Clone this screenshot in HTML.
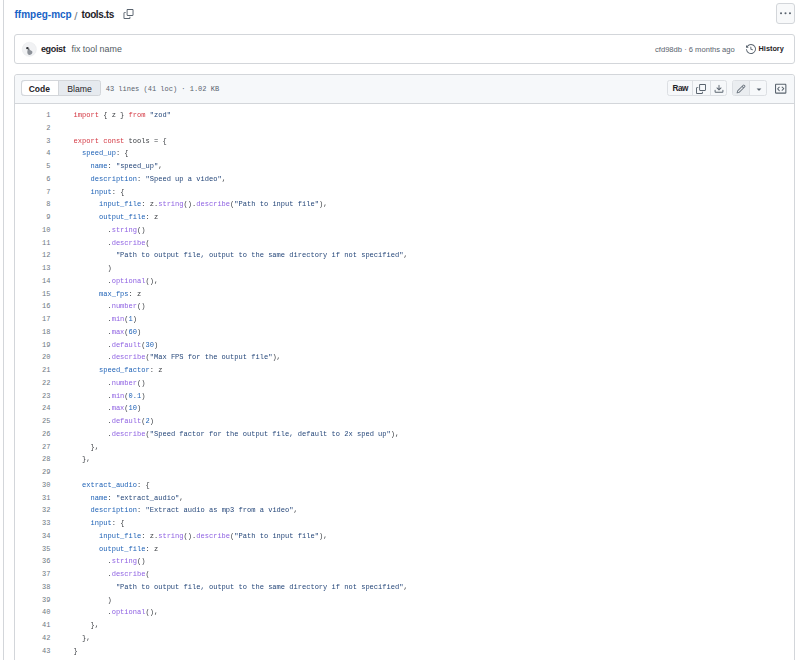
<!DOCTYPE html>
<html><head><meta charset="utf-8">
<style>
html,body{margin:0;padding:0;background:#fff;}
body{width:800px;height:660px;overflow:hidden;position:relative;font-family:"Liberation Sans",sans-serif;color:#1f2328;}
.abs{position:absolute;}
.t{position:absolute;white-space:pre;line-height:1;}
.vline{left:3px;top:0;width:1px;height:660px;background:#d3d6da;}
.crumb-repo{left:14.5px;top:9.5px;font-size:10px;font-weight:700;color:#1762c6;}
.crumb-sep{left:74.3px;top:10.6px;font-size:11.5px;color:#6e7781;}
.crumb-file{left:81.5px;top:9.5px;font-size:10px;letter-spacing:-0.4px;font-weight:700;color:#1f2328;}
.more{left:775.5px;top:3px;width:17px;height:19px;border:1px solid #d3d6da;border-radius:3px;background:#f8f9fa;}
.box{left:14px;width:779px;border:1px solid #d3d6da;border-radius:3px;background:#fff;}
.commit{top:34px;height:28px;}
.avatar{left:22px;top:42px;width:14px;height:14px;border-radius:50%;background:radial-gradient(circle at 60% 65%,#8a8f96 0,#b9bdc2 35%,#eceef0 70%,#f6f7f8 100%);}
.author{left:40.9px;top:45px;font-size:9px;letter-spacing:-0.33px;font-weight:700;color:#1f2328;}
.msg{left:71.5px;top:45px;font-size:8.9px;color:#525a63;}
.sha{left:655px;top:45.5px;font-size:7.6px;color:#59636e;}
.hist{left:758.6px;top:45px;font-size:7.3px;font-weight:700;color:#1f2328;}
.codebox{top:74px;height:640px;}
.chead{left:15px;top:75px;width:779px;height:28px;background:#f6f8fa;border-bottom:1px solid #d3d6da;border-radius:3px 3px 0 0;}
.seg{left:20.5px;top:80.2px;width:78.5px;height:14px;border:1px solid #d3d6da;border-radius:2.5px;background:#e6eaef;overflow:hidden;}
.seg-code{left:0;top:0;width:36px;height:14px;background:#fff;border-right:1px solid #d3d6da;border-radius:4px 0 0 4px;}
.lbl-code{left:28.7px;top:84.5px;font-size:8.5px;color:#1f2328;font-weight:700;}
.lbl-blame{left:67.2px;top:84.5px;font-size:8.7px;color:#1f2328;}
.meta{left:105.7px;top:85.7px;font-family:"Liberation Mono",monospace;font-size:7px;color:#59636e;}
.btng{top:80.2px;height:14px;border:1px solid #dcdfe3;border-radius:2.5px;background:#f6f8fa;overflow:hidden;}
.g1{left:667.4px;width:58px;}
.g2{left:732.3px;width:33px;}
.sepv{top:0;width:1px;height:14px;background:#dcdfe3;}
.raw{left:672.5px;top:85px;font-size:8.2px;letter-spacing:-0.5px;font-weight:700;color:#1f2328;}
.nums{left:0;top:109px;width:50.5px;text-align:right;font-family:"Liberation Mono",monospace;font-size:7px;line-height:12.75px;color:#6e7781;white-space:pre;}
.code{opacity:0.9;left:73.6px;top:109px;font-family:"Liberation Mono",monospace;font-size:7.05px;line-height:12.75px;color:#1f2328;white-space:pre;}
.kw{color:#cf222e}.str{color:#0a3069}.prop{color:#0550ae}.fn{color:#8250df}.num{color:#0550ae}
svg{position:absolute;overflow:visible;}
</style></head><body>
<div class="abs vline"></div>
<div class="t crumb-repo">ffmpeg-mcp</div>
<div class="t crumb-sep">/</div>
<div class="t crumb-file">tools.ts</div>
<svg style="left:123px;top:9px" width="11" height="10" viewBox="0 0 16 16"><path fill="#59636e" d="M0 6.75C0 5.784.784 5 1.75 5h1.5a.75.75 0 0 1 0 1.5h-1.5a.25.25 0 0 0-.25.25v7.5c0 .138.112.25.25.25h7.5a.25.25 0 0 0 .25-.25v-1.5a.75.75 0 0 1 1.5 0v1.5A1.75 1.75 0 0 1 9.25 16h-7.5A1.75 1.75 0 0 1 0 14.25Z"/><path fill="#59636e" d="M5 1.75C5 .784 5.784 0 6.75 0h7.5C15.216 0 16 .784 16 1.75v7.5A1.75 1.75 0 0 1 14.25 11h-7.5A1.75 1.75 0 0 1 5 9.25Zm1.75-.25a.25.25 0 0 0-.25.25v7.5c0 .138.112.25.25.25h7.5a.25.25 0 0 0 .25-.25v-7.5a.25.25 0 0 0-.25-.25Z"/></svg>
<div class="abs more"></div>
<svg style="left:779.6px;top:8.3px" width="11" height="11" viewBox="0 0 16 16"><path fill="#59636e" d="M8 9a1.5 1.5 0 1 0 0-3 1.5 1.5 0 0 0 0 3ZM1.5 9a1.5 1.5 0 1 0 0-3 1.5 1.5 0 0 0 0 3Zm13 0a1.5 1.5 0 1 0 0-3 1.5 1.5 0 0 0 0 3Z"/></svg>

<div class="abs box commit"></div>
<svg style="left:22px;top:41.8px" width="14.6" height="14.6" viewBox="0 0 14.6 14.6"><defs><filter id="bl" x="-50%" y="-50%" width="200%" height="200%"><feGaussianBlur stdDeviation="0.55"/></filter></defs><circle cx="7.3" cy="7.3" r="7.1" fill="#f1f2f4" stroke="#e4e6e9" stroke-width="0.4"/><g filter="url(#bl)"><path d="M5.5 8.2 C7 7.6 9.6 8 10.3 9.6 C10.8 11.4 9.6 13 7.6 13 C6 12.8 5.2 11.5 5.3 10 Z" fill="#8c9198"/><ellipse cx="5.4" cy="6.2" rx="1.3" ry="1.1" fill="#2f3236"/><ellipse cx="6.8" cy="7.2" rx="0.9" ry="0.7" fill="#55595f"/></g></svg>
<div class="t author">egoist</div>
<div class="t msg">fix tool name</div>
<div class="t sha">cfd98db · 6 months ago</div>
<svg style="left:745.6px;top:44.4px" width="10" height="10" viewBox="0 0 16 16"><path fill="#59636e" d="m.427 1.927 1.215 1.215a8.002 8.002 0 1 1-1.6 5.685.75.75 0 1 1 1.493-.154 6.5 6.5 0 1 0 1.18-4.458l1.358 1.358A.25.25 0 0 1 3.896 6H.25A.25.25 0 0 1 0 5.75V2.104a.25.25 0 0 1 .427-.177ZM7.75 4a.75.75 0 0 1 .75.75v2.992l2.028.812a.75.75 0 0 1-.557 1.392l-2.5-1A.751.751 0 0 1 7 8.25v-3.5A.75.75 0 0 1 7.75 4Z"/></svg>
<div class="t hist">History</div>

<div class="abs box codebox"></div>
<div class="abs chead"></div>
<div class="abs seg"><div class="abs seg-code"></div></div>
<div class="t lbl-code">Code</div>
<div class="t lbl-blame">Blame</div>
<div class="t meta">43 lines (41 loc) · 1.02 KB</div>

<div class="abs btng g1"><div class="abs sepv" style="left:24px"></div><div class="abs sepv" style="left:42px"></div></div>
<div class="t raw">Raw</div>
<svg style="left:696px;top:83.5px" width="10" height="10" viewBox="0 0 16 16"><path fill="#59636e" d="M0 6.75C0 5.784.784 5 1.75 5h1.5a.75.75 0 0 1 0 1.5h-1.5a.25.25 0 0 0-.25.25v7.5c0 .138.112.25.25.25h7.5a.25.25 0 0 0 .25-.25v-1.5a.75.75 0 0 1 1.5 0v1.5A1.75 1.75 0 0 1 9.25 16h-7.5A1.75 1.75 0 0 1 0 14.25Z"/><path fill="#59636e" d="M5 1.75C5 .784 5.784 0 6.75 0h7.5C15.216 0 16 .784 16 1.75v7.5A1.75 1.75 0 0 1 14.25 11h-7.5A1.75 1.75 0 0 1 5 9.25Zm1.75-.25a.25.25 0 0 0-.25.25v7.5c0 .138.112.25.25.25h7.5a.25.25 0 0 0 .25-.25v-7.5a.25.25 0 0 0-.25-.25Z"/></svg>
<svg style="left:714px;top:83.5px" width="10" height="10" viewBox="0 0 16 16"><path fill="#59636e" d="M2.75 14A1.75 1.75 0 0 1 1 12.25v-2.5a.75.75 0 0 1 1.5 0v2.5c0 .138.112.25.25.25h10.5a.25.25 0 0 0 .25-.25v-2.5a.75.75 0 0 1 1.5 0v2.5A1.75 1.75 0 0 1 13.25 14Z"/><path fill="#59636e" d="M7.25 7.689V2a.75.75 0 0 1 1.5 0v5.689l1.97-1.969a.749.749 0 1 1 1.06 1.06l-3.25 3.25a.749.749 0 0 1-1.06 0L4.22 6.78a.749.749 0 1 1 1.06-1.06l1.97 1.969Z"/></svg>

<div class="abs btng g2"><div class="abs" style="left:0;top:0;width:16px;height:14px;background:#eaedf0"></div><div class="abs sepv" style="left:16px"></div></div>
<svg style="left:736px;top:83.5px" width="10" height="10" viewBox="0 0 16 16"><path fill="#6e7781" d="M11.013 1.427a1.75 1.75 0 0 1 2.474 0l1.086 1.086a1.75 1.75 0 0 1 0 2.474l-8.61 8.61c-.21.21-.47.364-.756.445l-3.251.93a.75.75 0 0 1-.927-.928l.929-3.25c.081-.286.235-.547.445-.758l8.61-8.61Zm.176 4.823L9.75 4.81l-6.286 6.287a.253.253 0 0 0-.064.108l-.558 1.953 1.953-.558a.253.253 0 0 0 .108-.064Zm1.238-3.763a.25.25 0 0 0-.354 0L10.811 3.75l1.439 1.44 1.263-1.263a.25.25 0 0 0 0-.354Z"/></svg>
<svg style="left:754px;top:83.5px" width="10" height="10" viewBox="0 0 16 16"><path fill="#59636e" d="m4.427 7.427 3.396 3.396a.25.25 0 0 0 .354 0l3.396-3.396A.25.25 0 0 0 11.396 7H4.604a.25.25 0 0 0-.177.427Z"/></svg>
<svg style="left:774.6px;top:83.4px" width="11.4" height="11.4" viewBox="0 0 16 16"><path fill="#59636e" d="M1.75 1h12.5c.966 0 1.75.784 1.75 1.75v10.5A1.75 1.75 0 0 1 14.25 15H1.75A1.75 1.75 0 0 1 0 13.25V2.75C0 1.784.784 1 1.75 1ZM1.5 2.75v10.5c0 .138.112.25.25.25h12.5a.25.25 0 0 0 .25-.25V2.75a.25.25 0 0 0-.25-.25H1.75a.25.25 0 0 0-.25.25Zm5.03 3.47-1.97 1.97 1.97 1.97a.749.749 0 0 1-.326 1.275.749.749 0 0 1-.734-.215L3.22 8.72a.75.75 0 0 1 0-1.06l2.25-2.25a.751.751 0 0 1 1.042.018.751.751 0 0 1 .018 1.042Zm2.94 0a.751.751 0 0 1 .018-1.042.751.751 0 0 1 1.042-.018l2.25 2.25a.75.75 0 0 1 0 1.06l-2.25 2.25a.749.749 0 0 1-1.275-.326.749.749 0 0 1 .215-.734l1.97-1.97Z"/></svg>

<div class="abs nums">1
2
3
4
5
6
7
8
9
10
11
12
13
14
15
16
17
18
19
20
21
22
23
24
25
26
27
28
29
30
31
32
33
34
35
36
37
38
39
40
41
42
43</div>
<div class="abs code"><span class="kw">import</span> { z } <span class="kw">from</span> <span class="str">&quot;zod&quot;</span>

<span class="kw">export</span> <span class="kw">const</span> tools = {
  <span class="prop">speed_up</span>: {
    <span class="prop">name</span>: <span class="str">&quot;speed_up&quot;</span>,
    <span class="prop">description</span>: <span class="str">&quot;Speed up a video&quot;</span>,
    <span class="prop">input</span>: {
      <span class="prop">input_file</span>: z.<span class="fn">string</span>().<span class="fn">describe</span>(<span class="str">&quot;Path to input file&quot;</span>),
      <span class="prop">output_file</span>: z
        .<span class="fn">string</span>()
        .<span class="fn">describe</span>(
          <span class="str">&quot;Path to output file, output to the same directory if not specified&quot;</span>,
        )
        .<span class="fn">optional</span>(),
      <span class="prop">max_fps</span>: z
        .<span class="fn">number</span>()
        .<span class="fn">min</span>(<span class="num">1</span>)
        .<span class="fn">max</span>(<span class="num">60</span>)
        .<span class="fn">default</span>(<span class="num">30</span>)
        .<span class="fn">describe</span>(<span class="str">&quot;Max FPS for the output file&quot;</span>),
      <span class="prop">speed_factor</span>: z
        .<span class="fn">number</span>()
        .<span class="fn">min</span>(<span class="num">0.1</span>)
        .<span class="fn">max</span>(<span class="num">10</span>)
        .<span class="fn">default</span>(<span class="num">2</span>)
        .<span class="fn">describe</span>(<span class="str">&quot;Speed factor for the output file, default to 2x sped up&quot;</span>),
    },
  },

  <span class="prop">extract_audio</span>: {
    <span class="prop">name</span>: <span class="str">&quot;extract_audio&quot;</span>,
    <span class="prop">description</span>: <span class="str">&quot;Extract audio as mp3 from a video&quot;</span>,
    <span class="prop">input</span>: {
      <span class="prop">input_file</span>: z.<span class="fn">string</span>().<span class="fn">describe</span>(<span class="str">&quot;Path to input file&quot;</span>),
      <span class="prop">output_file</span>: z
        .<span class="fn">string</span>()
        .<span class="fn">describe</span>(
          <span class="str">&quot;Path to output file, output to the same directory if not specified&quot;</span>,
        )
        .<span class="fn">optional</span>(),
    },
  },
}</div>
</body></html>
